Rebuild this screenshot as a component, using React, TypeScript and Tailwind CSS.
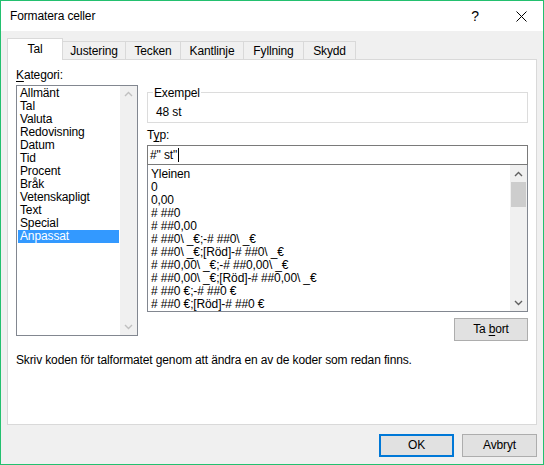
import React from 'react';

const categories = [
  'Allmänt', 'Tal', 'Valuta', 'Redovisning', 'Datum', 'Tid', 'Procent',
  'Bråk', 'Vetenskapligt', 'Text', 'Special', 'Anpassat',
];

const formats = [
  'Yleinen',
  '0',
  '0,00',
  '# ##0',
  '# ##0,00',
  '# ##0\\ _€;-# ##0\\ _€',
  '# ##0\\ _€;[Röd]-# ##0\\ _€',
  '# ##0,00\\ _€;-# ##0,00\\ _€',
  '# ##0,00\\ _€;[Röd]-# ##0,00\\ _€',
  '# ##0 €;-# ##0 €',
  '# ##0 €;[Röd]-# ##0 €',
];

const tabs = [
  { label: 'Justering', w: 'w-[63px]' },
  { label: 'Tecken', w: 'w-[55px]' },
  { label: 'Kantlinje', w: 'w-[63px]' },
  { label: 'Fyllning', w: 'w-[60px]' },
  { label: 'Skydd', w: 'w-[52px]' },
];

function Chevron({ up, color }: { up?: boolean; color: string }) {
  return (
    <svg width="9" height="6" viewBox="0 0 9 6">
      <path
        d={up ? 'M1 5 L4.5 1.5 L8 5' : 'M1 1 L4.5 4.5 L8 1'}
        fill="none"
        stroke={color}
        strokeWidth="1.4"
      />
    </svg>
  );
}

function Button({ children, primary }: { children: React.ReactNode; primary?: boolean }) {
  return (
    <div
      className={`w-[75px] h-[23px] flex items-center justify-center bg-[#e1e1e1] ${
        primary ? 'border-2 border-[#0078d7]' : 'border border-[#adadad]'
      }`}
    >
      {children}
    </div>
  );
}

export default function App() {
  return (
    <div
      className="w-[544px] h-[465px] border border-[#23c06f] bg-[#f0f0f0] flex flex-col text-[12px] leading-[15px] tracking-[-0.13px] text-black"
      style={{ fontFamily: '"Liberation Sans", Arial, sans-serif' }}
    >
      {/* Title bar */}
      <div className="h-[30px] bg-white flex items-center pl-[9px] pr-[16px]">
        <span className="flex-1">Formatera celler</span>
        <span className="text-[14px] mr-[37px]">?</span>
        <svg width="11" height="11" viewBox="0 0 11 11">
          <path d="M0.5 0.5 L10.5 10.5 M10.5 0.5 L0.5 10.5" stroke="#000" strokeWidth="1" />
        </svg>
      </div>

      {/* Tabs */}
      <div className="relative z-10 flex items-end h-[22px] mt-[7px] -mb-[1px] pl-[6px]">
        <div className="w-[56px] h-[22px] bg-white border border-b-0 border-[#d9d9d9] flex items-center justify-center pb-[1px]">
          Tal
        </div>
        {tabs.map((t) => (
          <div
            key={t.label}
            className={`${t.w} h-[18px] mb-[1px] border-t border-r border-[#d9d9d9] flex items-center justify-center pt-[2px]`}
          >
            {t.label}
          </div>
        ))}
      </div>

      {/* Panel */}
      <div className="ml-[6px] w-[530px] h-[366px] bg-white border border-[#d9d9d9] pt-[8px] pl-[8px]">
        <div className="flex gap-[9px]">
          {/* Category */}
          <div className="w-[122px] flex flex-col">
            <div className="h-[16px]">
              <span className="underline underline-offset-2">K</span>ategori:
            </div>
            <div className="mt-[1px] h-[251px] border border-[#828790] flex">
              <div className="flex-1 pt-[1px] pl-[1px]">
                {categories.map((c) => (
                  <div
                    key={c}
                    className={`h-[13px] leading-[13px] pl-[2px] mr-[1px] ${
                      c === 'Anpassat' ? 'bg-[#3399ff] text-white' : ''
                    }`}
                  >
                    {c}
                  </div>
                ))}
              </div>
              <div className="w-[17px] bg-[#f0f0f0] flex flex-col justify-between items-center py-[5px]">
                <Chevron up color="#c0c0c0" />
                <Chevron color="#c0c0c0" />
              </div>
            </div>
          </div>

          {/* Right column */}
          <div className="w-[381px] flex flex-col">
            <div className="relative mt-[24px] h-[31px] border border-[#dcdcdc] flex items-center pl-[8px] pt-[9px]">
              <span className="absolute -top-[7px] left-[5px] px-[1px] bg-white">Exempel</span>
              48 st
            </div>
            <div className="mt-[5px] h-[16px]">
              T<span className="underline underline-offset-2">y</span>p:
            </div>
            <div className="mt-[1px] h-[20px] border border-[#7a7a7a] flex items-center pl-[2px]">
              #" st"
              <span className="inline-block w-[1px] h-[14px] bg-black ml-[1px]" />
            </div>
            <div className="h-[147px] border border-t-0 border-[#828790] flex">
              <div className="flex-1 pt-[3px] pl-[3px]">
                {formats.map((f) => (
                  <div key={f} className="h-[13px] leading-[13px] whitespace-pre">
                    {f}
                  </div>
                ))}
              </div>
              <div className="w-[17px] bg-[#f0f0f0] flex flex-col">
                <div className="h-[17px] flex items-center justify-center">
                  <Chevron up color="#606060" />
                </div>
                <div className="h-[25px] mx-[1px] bg-[#cdcdcd]" />
                <div className="flex-1" />
                <div className="h-[17px] flex items-center justify-center">
                  <Chevron color="#606060" />
                </div>
              </div>
            </div>
            <div className="mt-[6px] flex justify-end">
              <div className="w-[74px] h-[23px] flex items-center justify-center bg-[#e1e1e1] border border-[#adadad]">
                Ta <span className="underline underline-offset-2 ml-[3px]">b</span>ort
              </div>
            </div>
          </div>
        </div>

        <div className="mt-[12px]">
          Skriv koden för talformatet genom att ändra en av de koder som redan finns.
        </div>
      </div>

      {/* Buttons */}
      <div className="flex justify-end gap-[8px] mt-[9px] pr-[6px]">
        <Button primary>OK</Button>
        <Button>Avbryt</Button>
      </div>
    </div>
  );
}
